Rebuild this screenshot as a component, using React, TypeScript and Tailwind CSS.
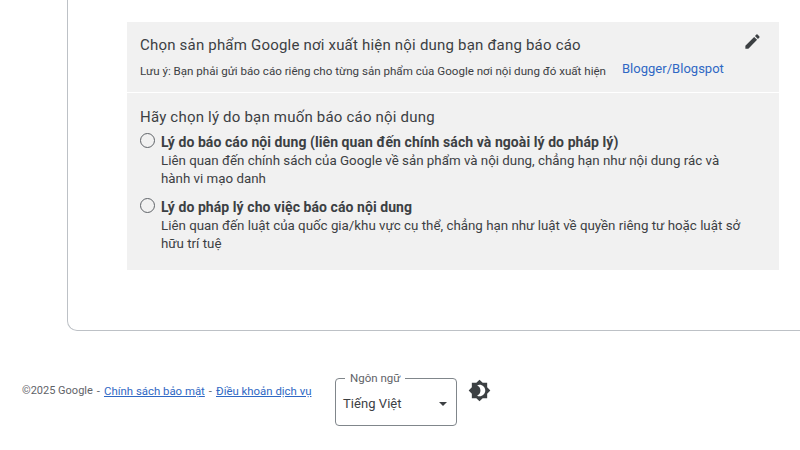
const font = { sans: "font-['Roboto','Liberation_Sans',sans-serif]" };

const reasons = [
  {
    title: "Lý do báo cáo nội dung (liên quan đến chính sách và ngoài lý do pháp lý)",
    lines: [
      "Liên quan đến chính sách của Google về sản phẩm và nội dung, chẳng hạn như nội dung rác và",
      "hành vi mạo danh",
    ],
  },
  {
    title: "Lý do pháp lý cho việc báo cáo nội dung",
    lines: [
      "Liên quan đến luật của quốc gia/khu vực cụ thể, chẳng hạn như luật về quyền riêng tư hoặc luật sở",
      "hữu trí tuệ",
    ],
  },
];

function PencilIcon() {
  return (
    <svg viewBox="0 0 24 24" className="h-[19px] w-[19px] fill-[#3c4043]">
      <path d="M3 17.25V21h3.75L17.81 9.94l-3.75-3.75L3 17.25zM20.71 7.04a1 1 0 0 0 0-1.41l-2.34-2.34a1 1 0 0 0-1.41 0l-1.83 1.83 3.75 3.75 1.83-1.83z" />
    </svg>
  );
}

function ThemeIcon() {
  return (
    <svg viewBox="0 0 24 24" className="h-[23px] w-[23px] fill-[#3c4043]">
      <path d="M20 8.69V4h-4.69L12 .69 8.69 4H4v4.69L.69 12 4 15.31V20h4.69L12 23.31 15.31 20H20v-4.69L23.31 12 20 8.69zM12 18c-.89 0-1.74-.2-2.5-.55C11.56 16.5 13 14.42 13 12s-1.44-4.5-3.5-5.45C10.26 6.2 11.11 6 12 6c3.31 0 6 2.69 6 6s-2.69 6-6 6z" />
    </svg>
  );
}

export default function App() {
  return (
    <div className={`h-[450px] w-[800px] overflow-hidden bg-white ${font.sans}`}>
      <div className="ml-[67px] h-[331px] rounded-bl-[10px] border-b border-l border-[#bdc1c6] pl-[59px] pt-[22px]">
        <div className="h-[248px] w-[652px] bg-[#f1f1f1]">
          <div className="h-[71px] border-b border-white pl-[13px] pr-[17px] pt-[13px]">
            <div className="flex items-start justify-between">
              <div className="text-[15px] leading-[20px] tracking-[0.2px] text-[#3c4043]">
                Chọn sản phẩm Google nơi xuất hiện nội dung bạn đang báo cáo
              </div>
              <div className="-mt-[3px]">
                <PencilIcon />
              </div>
            </div>
            <div className="mt-[7px] flex items-start gap-[16px]">
              <div className="mt-[1px] text-[11.58px] leading-[16px] text-[#3c4043]">
                Lưu ý: Bạn phải gửi báo cáo riêng cho từng sản phẩm của Google nơi nội dung đó xuất hiện
              </div>
              <a className="-mt-[2px] text-[13px] leading-[18px] tracking-[0.02px] text-[#2f68c4]">Blogger/Blogspot</a>
            </div>
          </div>
          <div className="pl-[13px] pt-[14px]">
            <div className="text-[15px] leading-[20px] tracking-[0.2px] text-[#3c4043]">
              Hãy chọn lý do bạn muốn báo cáo nội dung
            </div>
            <div className="mt-[6px] flex flex-col gap-[9px]">
              {reasons.map((r) => (
                <label key={r.title} className="flex gap-[6px]">
                  <span className="h-[15px] w-[15px] shrink-0 rounded-full border border-[#5f6368]" />
                  <span>
                    <span className="block text-[14px] font-bold leading-[18.5px] tracking-[0.07px] text-[#3c4043]">{r.title}</span>
                    {r.lines.map((line) => (
                      <span key={line} className="block text-[13.33px] leading-[18.75px] text-[#3c4043]">{line}</span>
                    ))}
                  </span>
                </label>
              ))}
            </div>
          </div>
        </div>
      </div>
      <div className="flex items-start pl-[22px] pt-[47px]">
        <div className="mt-[5px] flex w-[313px] text-[11.4px] leading-[16px] text-[#5f6368]">
          <span className="text-[11px]">©2025 Google</span>
          <span className="mx-[4px]">-</span>
          <a className="text-[#2f68c4] underline">Chính sách bảo mật</a>
          <span className="mx-[4px]">-</span>
          <a className="text-[#2f68c4] underline">Điều khoản dịch vụ</a>
        </div>
        <div className="relative flex h-[48px] w-[122px] items-center justify-between rounded-[4px] border border-[#80868b] pl-[7px] pr-[9px] pt-[4px]">
          <span className="absolute -top-[8px] left-[9px] bg-white px-[5px] text-[11.5px] leading-[14px] text-[#5f6368]">
            Ngôn ngữ
          </span>
          <span className="text-[13px] tracking-[0.05px] text-[#3c4043]">Tiếng Việt</span>
          <span className="h-0 w-0 border-x-[4px] border-t-[4px] border-x-transparent border-t-[#3c4043]" />
        </div>
        <div className="ml-[11px] mt-[1px]">
          <ThemeIcon />
        </div>
      </div>
    </div>
  );
}
